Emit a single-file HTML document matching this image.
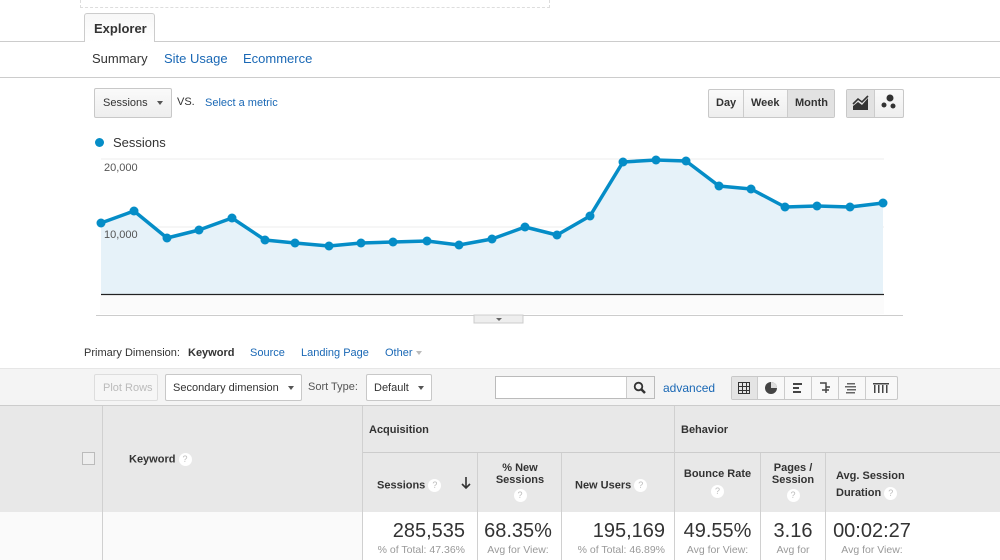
<!DOCTYPE html>
<html><head><meta charset="utf-8"><style>
*{margin:0;padding:0;box-sizing:border-box}
body{width:1000px;height:560px;overflow:hidden;background:#fff;font-family:"Liberation Sans",Arial,sans-serif;position:relative;color:#333}
.a{position:absolute}
.lnk{color:#1a68b5}
.btn{position:absolute;border:1px solid #c8c8c8;border-radius:2px;background:linear-gradient(#fafafa,#eee);font-size:11px;color:#333}
.tri{display:inline-block;width:0;height:0;border-left:3.5px solid transparent;border-right:3.5px solid transparent;border-top:4px solid #555;vertical-align:middle}
.th{position:absolute;font-size:11px;font-weight:bold;color:#333}
.q{display:inline-block;width:13px;height:13px;border-radius:50%;background:#fff;color:#bbb;font-size:9px;text-align:center;line-height:13px;font-weight:normal;vertical-align:middle}
.big{position:absolute;font-size:20px;color:#333;text-align:right}
.sm{position:absolute;font-size:10.5px;color:#999;text-align:right}
.vl{position:absolute;width:1px;background:#d0d0d0}
</style></head><body>
<div class="a" style="left:80px;top:0;width:470px;height:8px;border-bottom:1px dashed #ddd;border-left:1px dashed #ddd;border-right:1px dashed #ddd"></div>
<div class="a" style="left:0;top:41px;width:1000px;height:1px;background:#ccc"></div>
<div class="a" style="left:84px;top:13px;width:71px;height:29px;border:1px solid #ccc;border-bottom:none;background:linear-gradient(#f7f7f7,#fff);border-radius:3px 3px 0 0;font-size:13px;font-weight:bold;padding:7px 0 0 9px">Explorer</div>
<div class="a" style="left:92px;top:51px;font-size:13px;color:#333">Summary</div>
<div class="a lnk" style="left:164px;top:51px;font-size:13px">Site Usage</div>
<div class="a lnk" style="left:243px;top:51px;font-size:13px">Ecommerce</div>
<div class="a" style="left:0;top:77px;width:1000px;height:1px;background:#ccc"></div>

<div class="btn" style="left:94px;top:88px;width:78px;height:30px;padding:8px 0 0 8px">Sessions &nbsp;&nbsp;<span class="tri"></span></div>
<div class="a" style="left:177px;top:96px;font-size:11px">VS.</div>
<div class="a lnk" style="left:205px;top:97px;font-size:11px">Select a metric</div>

<div class="btn" style="left:708px;top:89px;width:127px;height:29px;font-weight:bold"></div>
<div class="a" style="left:716px;top:97px;font-size:11px;font-weight:bold">Day</div>
<div class="a" style="left:743px;top:90px;width:1px;height:27px;background:#ccc"></div>
<div class="a" style="left:751px;top:97px;font-size:11px;font-weight:bold">Week</div>
<div class="a" style="left:787px;top:90px;width:47px;height:27px;background:#e2e2e2;border-left:1px solid #ccc"></div>
<div class="a" style="left:795px;top:97px;font-size:11px;font-weight:bold">Month</div>
<div class="btn" style="left:846px;top:89px;width:58px;height:29px"></div>
<div class="a" style="left:847px;top:90px;width:28px;height:27px;background:#e2e2e2;border-right:1px solid #ccc"></div>
<svg class="a" style="left:851px;top:93px" width="20" height="20" viewBox="0 0 20 20"><path d="M2 17 L2 13 L7 9 L11 12 L17 5 L17 17Z" fill="#333"/><path d="M2 11 L7 6 L11 9 L17 3" stroke="#333" stroke-width="1.6" fill="none"/></svg>
<svg class="a" style="left:879px;top:92px" width="20" height="20" viewBox="0 0 20 20"><circle cx="11" cy="6" r="3.5" fill="#333"/><circle cx="5" cy="13" r="2.5" fill="#333"/><circle cx="14" cy="14" r="2.5" fill="#333"/></svg>

<div class="a" style="left:95px;top:138px;width:9px;height:9px;border-radius:50%;background:#058dc7"></div>
<div class="a" style="left:113px;top:135px;font-size:13px">Sessions</div>
<svg class="a" style="left:0;top:0" width="1000" height="330">
<line x1="101" y1="159" x2="884" y2="159" stroke="#eee"/>
<line x1="101" y1="227" x2="884" y2="227" stroke="#eee"/>
<polygon fill="#e6f2f9" points="101,295 101,223 134,211 167,238 199,230 232,218 265,240 295,243 329,246 361,243 393,242 427,241 459,245 492,239 525,227 557,235 590,216 623,162 656,160 686,161 719,186 751,189 785,207 817,206 850,207 883,203 883,295"/>
<polyline fill="none" stroke="#058dc7" stroke-width="3.5" stroke-linejoin="round" points="101,223 134,211 167,238 199,230 232,218 265,240 295,243 329,246 361,243 393,242 427,241 459,245 492,239 525,227 557,235 590,216 623,162 656,160 686,161 719,186 751,189 785,207 817,206 850,207 883,203"/>
<g fill="#058dc7">
<circle cx="101" cy="223" r="4.5"/><circle cx="134" cy="211" r="4.5"/><circle cx="167" cy="238" r="4.5"/><circle cx="199" cy="230" r="4.5"/><circle cx="232" cy="218" r="4.5"/><circle cx="265" cy="240" r="4.5"/><circle cx="295" cy="243" r="4.5"/><circle cx="329" cy="246" r="4.5"/><circle cx="361" cy="243" r="4.5"/><circle cx="393" cy="242" r="4.5"/><circle cx="427" cy="241" r="4.5"/><circle cx="459" cy="245" r="4.5"/><circle cx="492" cy="239" r="4.5"/><circle cx="525" cy="227" r="4.5"/><circle cx="557" cy="235" r="4.5"/><circle cx="590" cy="216" r="4.5"/><circle cx="623" cy="162" r="4.5"/><circle cx="656" cy="160" r="4.5"/><circle cx="686" cy="161" r="4.5"/><circle cx="719" cy="186" r="4.5"/><circle cx="751" cy="189" r="4.5"/><circle cx="785" cy="207" r="4.5"/><circle cx="817" cy="206" r="4.5"/><circle cx="850" cy="207" r="4.5"/><circle cx="883" cy="203" r="4.5"/>
</g>
<line x1="101" y1="294.5" x2="884" y2="294.5" stroke="#222" stroke-width="1.2"/>
<rect x="100" y="296" width="784" height="18" fill="#fbfbfb"/>
<line x1="96" y1="315.5" x2="903" y2="315.5" stroke="#ccc"/>
<rect x="474" y="315" width="49" height="8" fill="#eee" stroke="#ccc"/>
<path d="M496 318 L502 318 L499 321Z" fill="#666"/>
</svg>
<div class="a" style="left:104px;top:162px;font-size:11px;color:#555">20,000</div>
<div class="a" style="left:104px;top:229px;font-size:11px;color:#555">10,000</div>

<div class="a" style="left:84px;top:347px;font-size:11px">Primary Dimension:</div>
<div class="a" style="left:188px;top:347px;font-size:11px;font-weight:bold">Keyword</div>
<div class="a lnk" style="left:250px;top:347px;font-size:11px">Source</div>
<div class="a lnk" style="left:301px;top:347px;font-size:11px">Landing Page</div>
<div class="a lnk" style="left:385px;top:347px;font-size:11px">Other <span class="tri" style="border-top-color:#bbb"></span></div>

<div class="a" style="left:0;top:368px;width:1000px;height:38px;background:#f4f4f4;border-top:1px solid #e6e6e6"></div>
<div class="btn" style="left:94px;top:374px;width:64px;height:27px;color:#bbb;padding:7px 0 0 8px;background:#f6f6f6;border-color:#ddd">Plot Rows</div>
<div class="btn" style="left:165px;top:374px;width:137px;height:27px;padding:7px 0 0 7px;background:#fff">Secondary dimension &nbsp;&nbsp;<span class="tri"></span></div>
<div class="a" style="left:308px;top:381px;font-size:11px;color:#555">Sort Type:</div>
<div class="btn" style="left:366px;top:374px;width:66px;height:27px;padding:7px 0 0 7px;background:#fff">Default &nbsp;&nbsp;<span class="tri"></span></div>
<div class="a" style="left:495px;top:376px;width:160px;height:23px;border:1px solid #bbb;background:#fff"></div>
<div class="a" style="left:626px;top:377px;width:28px;height:21px;border-left:1px solid #ccc;background:#f2f2f2"></div>
<svg class="a" style="left:633px;top:381px" width="14" height="14"><circle cx="5.5" cy="5.5" r="3.8" stroke="#333" stroke-width="1.8" fill="none"/><line x1="8.5" y1="8.5" x2="12" y2="12" stroke="#333" stroke-width="2.5"/></svg>
<div class="a lnk" style="left:663px;top:381px;font-size:12px">advanced</div>
<div class="btn" style="left:731px;top:376px;width:167px;height:24px;background:#f8f8f8"></div>
<div class="a" style="left:732px;top:377px;width:25px;height:22px;background:#e4e4e4"></div>
<svg class="a" style="left:731px;top:376px" width="167" height="24">
<g stroke="#ccc"><line x1="26.5" y1="1" x2="26.5" y2="23"/><line x1="53.5" y1="1" x2="53.5" y2="23"/><line x1="80.5" y1="1" x2="80.5" y2="23"/><line x1="107.5" y1="1" x2="107.5" y2="23"/><line x1="134.5" y1="1" x2="134.5" y2="23"/></g>
<g stroke="#333" fill="none"><rect x="7.5" y="6.5" width="11" height="11"/><path d="M7.5 10.5H18.5M7.5 14.5H18.5M11.5 6.5V17.5M15.5 6.5V17.5"/></g>
<circle cx="40" cy="12" r="6" fill="#444"/><path d="M40 12V6A6 6 0 0 1 46 12Z" fill="#ddd"/>
<g fill="#444"><rect x="62" y="7" width="9" height="2"/><rect x="62" y="11" width="6" height="2"/><rect x="62" y="15" width="8" height="2"/></g>
<path d="M89 7H95V17M95 11H99M91 14H98" stroke="#444" stroke-width="1.5" fill="none"/>
<g fill="#666"><rect x="116" y="7" width="8" height="1.5"/><rect x="114" y="10" width="11" height="1.5"/><rect x="116" y="13" width="9" height="1.5"/><rect x="115" y="16" width="9" height="1.5"/></g>
<g fill="#444"><rect x="142" y="7" width="16" height="1.5"/><rect x="143" y="9" width="1.5" height="8"/><rect x="147" y="9" width="1.5" height="8"/><rect x="151" y="9" width="1.5" height="8"/><rect x="155" y="9" width="1.5" height="8"/></g>
</svg>

<div class="a" style="left:0;top:405px;width:1000px;height:108px;background:#e8e8e8;border-top:1px solid #ccc;border-bottom:1px solid #ccc"></div>
<div class="a" style="left:0;top:512px;width:1000px;height:48px;background:#fafafa"></div>
<div class="a" style="left:363px;top:512px;width:637px;height:48px;background:#fff"></div>
<div class="a" style="left:363px;top:452px;width:637px;height:1px;background:#ccc"></div>
<div class="vl" style="left:102px;top:406px;height:154px"></div>
<div class="vl" style="left:362px;top:406px;height:154px"></div>
<div class="vl" style="left:674px;top:406px;height:154px"></div>
<div class="vl" style="left:477px;top:453px;height:107px"></div>
<div class="vl" style="left:561px;top:453px;height:107px"></div>
<div class="vl" style="left:760px;top:453px;height:107px"></div>
<div class="vl" style="left:825px;top:453px;height:107px"></div>
<div class="a" style="left:82px;top:452px;width:13px;height:13px;border:1px solid #bbb;background:#eee"></div>
<div class="th" style="left:129px;top:453px">Keyword <span class="q">?</span></div>
<div class="th" style="left:369px;top:424px">Acquisition</div>
<div class="th" style="left:681px;top:424px">Behavior</div>
<div class="th" style="left:377px;top:479px">Sessions <span class="q">?</span></div>
<svg class="a" style="left:460px;top:476px" width="12" height="14"><path d="M6 1V12M2 8L6 12L10 8" stroke="#333" stroke-width="1.6" fill="none"/></svg>
<div class="th" style="left:478px;top:462px;width:84px;text-align:center;line-height:12px">% New<br>Sessions<br><span class="q" style="margin-top:3px">?</span></div>
<div class="th" style="left:575px;top:479px">New Users <span class="q">?</span></div>
<div class="th" style="left:675px;top:468px;width:85px;text-align:center;line-height:12px">Bounce Rate<br><span class="q" style="margin-top:5px">?</span></div>
<div class="th" style="left:761px;top:462px;width:64px;text-align:center;line-height:12px">Pages /<br>Session<br><span class="q" style="margin-top:3px">?</span></div>
<div class="th" style="left:836px;top:468px;line-height:17px">Avg. Session<br>Duration <span class="q">?</span></div>

<div class="big" style="left:363px;top:520px;width:102px">285,535</div>
<div class="sm" style="left:363px;top:544px;width:102px">% of Total: 47.36%</div>
<div class="big" style="left:478px;top:520px;width:80px;text-align:center">68.35%</div>
<div class="sm" style="left:478px;top:544px;width:80px;text-align:center">Avg for View:</div>
<div class="big" style="left:562px;top:520px;width:103px">195,169</div>
<div class="sm" style="left:562px;top:544px;width:103px">% of Total: 46.89%</div>
<div class="big" style="left:675px;top:520px;width:85px;text-align:center">49.55%</div>
<div class="sm" style="left:675px;top:544px;width:85px;text-align:center">Avg for View:</div>
<div class="big" style="left:761px;top:520px;width:64px;text-align:center">3.16</div>
<div class="sm" style="left:761px;top:544px;width:64px;text-align:center">Avg for</div>
<div class="big" style="left:826px;top:520px;width:92px;text-align:center">00:02:27</div>
<div class="sm" style="left:826px;top:544px;width:92px;text-align:center">Avg for View:</div>
</body></html>
